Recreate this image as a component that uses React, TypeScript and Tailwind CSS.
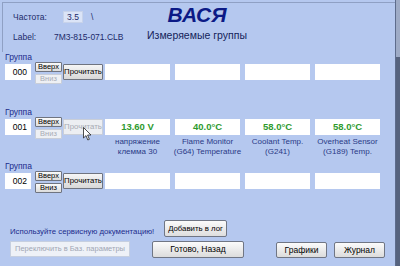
import React from "react";

const font = { fontFamily: '"Liberation Sans", Arial, sans-serif' };

const boxes = ["", "", "", ""];

function SmallButton({
  label,
  disabled,
}: {
  label: string;
  disabled?: boolean;
}) {
  return (
    <div
      className={
        "flex h-[10px] w-[27px] items-center justify-center rounded-[1px] border text-[7.5px] leading-none whitespace-nowrap " +
        (disabled
          ? "border-[#c9ced8] bg-[#eef0f4] text-[#a7abb4]"
          : "border-[#6f7480] bg-gradient-to-b from-[#fbfbfb] to-[#dcdcdc] text-black")
      }
    >
      {label}
    </div>
  );
}

function Group({
  code,
  upDisabled,
  downDisabled,
  readDisabled,
  values,
  captions,
}: {
  code: string;
  upDisabled?: boolean;
  downDisabled?: boolean;
  readDisabled?: boolean;
  values: string[];
  captions?: string[][];
}) {
  return (
    <div className="pl-[5px]">
      <div className="h-[10px] text-[8.5px] leading-[10px] text-[#1c2c8c]">Группа</div>
      <div className="flex items-start">
        <div className="mt-[2px] flex h-[16px] w-[26px] items-center justify-end bg-white pr-[4px] text-[8.5px] text-black">
          {code}
        </div>
        <div className="ml-[4px] flex flex-col gap-[2px]">
          <SmallButton label="Вверх" disabled={upDisabled} />
          <SmallButton label="Вниз" disabled={downDisabled} />
        </div>
        <div
          className={
            "ml-[1px] mt-[2px] flex h-[16px] w-[40px] items-center justify-center rounded-[1px] border text-[7.8px] whitespace-nowrap " +
            (readDisabled
              ? "border-[#c9ced8] bg-[#eceef2] text-[#a7abb4]"
              : "border-[#6f7480] bg-gradient-to-b from-[#f6f6f6] to-[#d8d8d8] text-black")
          }
        >
          Прочитать
        </div>
        <div className="ml-[2px] mt-[2px] flex gap-[5px]">
          {values.map((v, i) => (
            <div key={i} className="flex w-[65px] flex-col items-center">
              <div className="flex h-[16px] w-[65px] items-center justify-center bg-white text-[9.5px] font-bold text-[#2e9a2e]">
                {v}
              </div>
              {captions && (
                <div className="mt-[2px] text-center text-[8px] leading-[10px] text-[#2a3a86] whitespace-nowrap">
                  {captions[i].map((c) => (
                    <div key={c}>{c}</div>
                  ))}
                </div>
              )}
            </div>
          ))}
        </div>
      </div>
    </div>
  );
}

export default function App() {
  return (
    <div className="relative flex h-[266px] w-[400px] overflow-hidden bg-[#b5c8ef]" style={font}>
      <div className="h-full w-[396px] border-r border-[#5d6c8c]">
        {/* header */}
        <div className="ml-[2px] mt-[2px] flex h-[50px] border-l border-t border-[#8fa0c4]">
          <div className="w-[138px] pl-[10px] pt-[8px] text-[8.5px] text-[#1c2a6a]">
            <div className="flex h-[12px] items-center">
              <span className="w-[50px]">Частота:</span>
              <div className="flex h-[12px] w-[20px] items-center justify-center border border-[#c8d3ea] bg-[#dbe4f7] text-[8.5px] text-[#1c2a6a]">
                3.5
              </div>
              <span className="ml-[8px]">\</span>
            </div>
            <div className="mt-[8px] flex h-[12px] items-center">
              <span className="w-[41px]">Label:</span>
              <span>7M3-815-071.CLB</span>
            </div>
          </div>
          <div className="flex w-[112px] flex-col items-center pt-[1px]">
            <div className="text-[21px] font-bold italic leading-none text-[#0c1a86]">ВАСЯ</div>
            <div className="mt-[4px] whitespace-nowrap text-[10.5px] leading-[12px] text-[#141e5a]">
              Измеряемые группы
            </div>
          </div>
        </div>

        <Group code="000" downDisabled values={boxes} />
        <div className="mt-[23px]">
          <Group
            code="001"
            downDisabled
            readDisabled
            values={["13.60 V", "40.0°C", "58.0°C", "58.0°C"]}
            captions={[
              ["напряжение", "клемма 30"],
              ["Flame Monitor", "(G64) Temperature"],
              ["Coolant Temp.", "(G241)"],
              ["Overheat Sensor", "(G189) Temp."],
            ]}
          />
        </div>
        <div className="mt-[4px]">
          <Group code="002" values={boxes} />
        </div>

        {/* bottom */}
        <div className="mt-[27px] flex items-end">
          <div className="w-[164px] pl-[10px] text-[7.8px] leading-[10px] text-[#1c2c8c] whitespace-nowrap">
            Используйте сервисную документацию!
          </div>
          <div className="flex h-[17px] w-[63px] items-center justify-center rounded-[2px] border border-[#707684] bg-gradient-to-b from-[#fbfbfb] to-[#dedede] text-[7.8px] text-black whitespace-nowrap">
            Добавить в лог
          </div>
        </div>
        <div className="mt-[4px] flex items-start">
          <div className="ml-[10px] flex h-[16px] w-[120px] items-center border border-[#c6cfe0] bg-[#eef1f7] pl-[4px] text-[7.5px] text-[#a0a6b4] whitespace-nowrap">
            Переключить в Баз. параметры
          </div>
          <div className="ml-[22px] flex h-[17px] w-[92px] items-center justify-center rounded-[2px] border border-[#707684] bg-gradient-to-b from-[#fbfbfb] to-[#dcdcdc] text-[8.5px] text-black">
            Готово, Назад
          </div>
          <div className="ml-[32px] mt-[1px] flex h-[16px] w-[51px] items-center justify-center rounded-[2px] border border-[#707684] bg-gradient-to-b from-[#fbfbfb] to-[#dcdcdc] text-[8.5px] text-black">
            Графики
          </div>
          <div className="ml-[7px] mt-[1px] flex h-[16px] w-[51px] items-center justify-center rounded-[2px] border border-[#707684] bg-gradient-to-b from-[#fbfbfb] to-[#dcdcdc] text-[8.5px] text-black">
            Журнал
          </div>
        </div>
      </div>
      <div className="flex h-full w-[4px] flex-col">
        <div className="h-[57px] bg-[#9eabc6]" />
        <div className="flex-1 bg-[#56637e]" />
      </div>

      {/* mouse cursor */}
      <svg
        className="absolute left-[83px] top-[127px]"
        width="9"
        height="14"
        viewBox="0 0 9 14"
      >
        <path
          d="M0.5 0.5 L0.5 11 L3 8.6 L4.8 13 L6.4 12.3 L4.6 8 L8 8 Z"
          fill="white"
          stroke="#222"
          strokeWidth="0.8"
          strokeLinejoin="round"
        />
      </svg>
    </div>
  );
}
